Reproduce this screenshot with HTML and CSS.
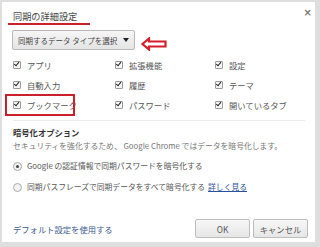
FILE: index.html
```html
<!DOCTYPE html>
<html lang="ja">
<head>
	<meta charset="UTF-8">
	<title>同期の詳細設定</title>
	<link rel="stylesheet" href="styles.css">
</head>
<body>
	<div class="dialog">
		<div class="head">
			<span class="title">同期の詳細設定</span>
			<span class="close">×</span>
		</div>

		<div class="pick">
			<div class="select">同期するデータ タイプを選択 <span class="caret"></span></div>
			<!-- 注釈の矢印 -->
			<svg class="arrow" width="26" height="14" viewBox="0 0 26 14">
				<path d="M1.5 7 L8 1.5 L8 4.5 L24.5 4.5 L24.5 9.5 L8 9.5 L8 12.5 Z" fill="none" stroke="#d21f2b" stroke-width="2.2" stroke-linejoin="miter"/>
			</svg>
		</div>

		<ul class="types">
			<li><i class="box"></i>アプリ</li>
			<li><i class="box"></i>拡張機能</li>
			<li><i class="box"></i>設定</li>
			<li><i class="box"></i>自動入力</li>
			<li><i class="box"></i>履歴</li>
			<li><i class="box"></i>テーマ</li>
			<li class="mark"><i class="box"></i>ブックマーク</li>
			<li><i class="box"></i>パスワード</li>
			<li><i class="box"></i>開いているタブ</li>
		</ul>

		<div class="crypt">
			<p class="sub">暗号化オプション</p>
			<p class="note">セキュリティを強化するため、 Google Chrome ではデータを暗号化します。</p>
			<p class="radio"><i class="dot on"></i>Google の認証情報で同期パスワードを暗号化する</p>
			<p class="radio"><i class="dot"></i>同期パスフレーズで同期データをすべて暗号化する <a href="#">詳しく見る</a></p>
		</div>

		<div class="foot">
			<a class="reset" href="#">デフォルト設定を使用する</a>
			<div class="btns">
				<span class="btn ok">OK</span>
				<span class="btn">キャンセル</span>
			</div>
		</div>
	</div>
</body>
</html>
```

FILE: styles.css
```css
html,
body,
ul,
li,
p {
	margin: 0;
	padding: 0;
}
li {
	list-style: none;
}
body {
	width: 320px;
	height: 247px;
	overflow: hidden;
	background: #dedede;
	font-family: "Noto Sans CJK JP", "Liberation Sans", sans-serif;
	font-size: 8.3px;
	color: #555;
}
.dialog {
	position: relative;
	box-sizing: border-box;
	width: 313px;
	height: 240px;
	margin: 2px 0 0 2px;
	padding: 0 0 0 11px;
	background: #fff;
	display: flex;
	flex-direction: column;
}
.head {
	display: flex;
	justify-content: space-between;
	align-items: flex-start;
	height: 27px;
}
.title {
	margin: 8px 0 0 -5px;
	padding: 0 13px 0 5px;
	line-height: 12px;
	height: 13px;
	font-size: 9.2px;
	color: #444;
	border-bottom: 2px solid #cc1f2c;
}
.close {
	margin: 5px 3px 0 0;
	font-family: "DejaVu Sans", sans-serif;
	font-size: 10px;
	font-weight: bold;
	color: #777;
}
.pick {
	display: flex;
	align-items: center;
	height: 20px;
	margin-top: 1px;
}
.select {
	box-sizing: border-box;
	width: 123px;
	height: 20px;
	margin-left: -1px;
	padding: 0 0 0 5px;
	display: flex;
	align-items: center;
	border: 1px solid #b9b9b9;
	border-radius: 2px;
	background: linear-gradient(#f6f6f6, #e4e4e4);
	color: #444;
	font-size: 7.5px;
	white-space: nowrap;
}
.caret {
	margin-left: 6px;
	border-left: 3px solid transparent;
	border-right: 3px solid transparent;
	border-top: 4px solid #222;
}
.arrow {
	margin: 7px 0 0 6px;
}
.types {
	display: grid;
	grid-template-columns: 102px 100px 100px;
	grid-auto-rows: 20px;
	margin-top: 5px;
	width: 300px;
}
.types li {
	position: relative;
	display: flex;
	align-items: center;
	color: #555;
}
.box {
	box-sizing: border-box;
	width: 8px;
	height: 8px;
	margin-right: 6px;
	border: 1px solid #9a9a9a;
	border-radius: 1px;
	background: #f4f4f4;
	position: relative;
}
.box::after {
	content: "";
	position: absolute;
	left: 1.2px;
	top: -0.8px;
	width: 2.2px;
	height: 4.2px;
	border-right: 1.6px solid #222;
	border-bottom: 1.6px solid #222;
	transform: rotate(40deg);
}
.mark::before {
	content: "";
	position: absolute;
	left: -8px;
	top: -1px;
	width: 66px;
	height: 18px;
	border: 2px solid #cc1f2c;
}
.crypt {
	margin: 5px 10px 0 0;
	padding-top: 5px;
	border-top: 1px solid #ececec;
}
.sub {
	font-weight: bold;
	color: #333;
	line-height: 12px;
}
.note {
	margin-top: 2px;
	color: #777;
	line-height: 12px;
	font-size: 7.8px;
	white-space: nowrap;
}
.radio {
	display: flex;
	align-items: center;
	margin-top: 8px;
	line-height: 12px;
	height: 12px;
	font-size: 7.8px;
	color: #555;
	white-space: nowrap;
}
.radio + .radio {
	margin-top: 9px;
}
.dot {
	box-sizing: border-box;
	width: 9px;
	height: 9px;
	margin-right: 5px;
	border: 1px solid #aaa;
	border-radius: 50%;
	background: #f2f2f2;
	position: relative;
}
.dot.on::after {
	content: "";
	position: absolute;
	left: 2px;
	top: 2px;
	width: 3px;
	height: 3px;
	border-radius: 50%;
	background: #444;
}
.radio a {
	margin-left: 3px;
	color: #2850a0;
}
.foot {
	display: flex;
	justify-content: space-between;
	align-items: center;
	margin-top: auto;
	margin-bottom: 4px;
	padding-right: 7px;
}
.reset {
	color: #3a5c92;
	text-decoration: none;
}
.btns {
	display: flex;
	gap: 3px;
}
.btn {
	box-sizing: border-box;
	width: 55px;
	height: 19px;
	display: flex;
	align-items: center;
	justify-content: center;
	border: 1px solid #bdbdbd;
	border-radius: 2px;
	background: linear-gradient(#f7f7f7, #e6e6e6);
	color: #555;
	font-size: 8.3px;
}
```
